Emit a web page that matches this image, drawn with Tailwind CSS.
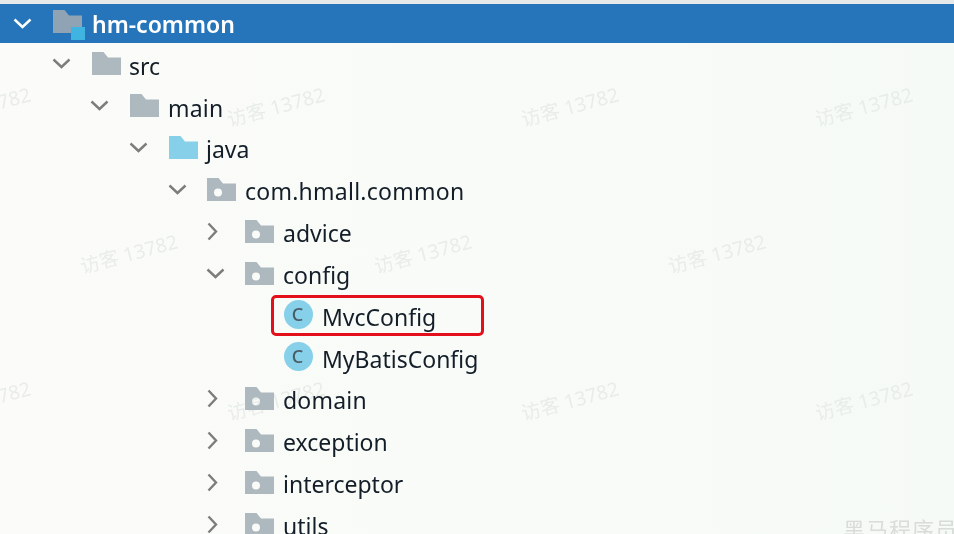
<!DOCTYPE html>
<html><head><meta charset="utf-8"><script src="https://cdn.jsdelivr.net/npm/@tailwindcss/browser@4"></script></head>
<body class="m-0">
<svg width="0" height="0" class="absolute">
<defs>
<path id="f" d="M0 0H11.5L16 5.5H29V23H0Z"/>
<path id="p" fill-rule="evenodd" d="M0 0H11.5L16 5.5H29V23H0ZM7 14.5a4 4 0 1 0 8 0a4 4 0 1 0-8 0Z"/>
<path id="d" d="M1.5 1.5L9.5 9L17.5 1.5" fill="none" stroke-width="2.4"/>
<path id="r" d="M1.5 1.5L9 9.5L1.5 17.5" fill="none" stroke-width="2.4"/>
</defs>
</svg>
<div class="relative w-[954px] h-[534px] overflow-hidden bg-gradient-to-r from-[#fbfcf9] to-[#f6faf6] font-['Noto_Sans','Noto_Sans_CJK_SC',sans-serif] text-[23px] text-[#141e28] blur-[0.4px]">
  <!-- watermarks -->
  <div class="absolute inset-0 text-[19.5px] text-[#e9edea] font-['Noto_Sans','Noto_Sans_CJK_SC',sans-serif]">
    <span class="absolute left-[-68px] top-[92px] -rotate-[15deg] whitespace-nowrap">访客 13782</span>
    <span class="absolute left-[226px] top-[92px] -rotate-[15deg] whitespace-nowrap">访客 13782</span>
    <span class="absolute left-[520px] top-[92px] -rotate-[15deg] whitespace-nowrap">访客 13782</span>
    <span class="absolute left-[814px] top-[92px] -rotate-[15deg] whitespace-nowrap">访客 13782</span>
    <span class="absolute left-[79px] top-[239px] -rotate-[15deg] whitespace-nowrap">访客 13782</span>
    <span class="absolute left-[373px] top-[239px] -rotate-[15deg] whitespace-nowrap">访客 13782</span>
    <span class="absolute left-[667px] top-[239px] -rotate-[15deg] whitespace-nowrap">访客 13782</span>
    <span class="absolute left-[-68px] top-[386px] -rotate-[15deg] whitespace-nowrap">访客 13782</span>
    <span class="absolute left-[226px] top-[386px] -rotate-[15deg] whitespace-nowrap">访客 13782</span>
    <span class="absolute left-[520px] top-[386px] -rotate-[15deg] whitespace-nowrap">访客 13782</span>
    <span class="absolute left-[814px] top-[386px] -rotate-[15deg] whitespace-nowrap">访客 13782</span>
    <span class="absolute left-[843px] top-[513px] text-[22px] tracking-[1px] text-[#d9dcd9] whitespace-nowrap">黑马程序员</span>
  </div>

  <div class="relative flex flex-col pt-[4px]">
    <div class="flex items-center h-[39px] bg-[#2675bb] text-white font-semibold pl-[13px] shadow-[0_-4px_0_#e6e8ea]">
      <svg class="w-[19px] h-[11px] stroke-white -mt-[1px]" viewBox="0 0 19 11"><use href="#d"/></svg>
      <svg class="ml-[21px] w-[32px] h-[30px] mt-[3px]" viewBox="0 0 32 30"><use href="#f" fill="#8fa3b5"/><rect x="18" y="17" width="14" height="13" fill="#3fb4e0"/></svg>
      <span class="ml-[7px] mt-[1px]">hm-common</span>
    </div>
    <div class="flex items-center h-[41.85px] pl-[52px]"><svg class="w-[19px] h-[11px] stroke-[#7d7d7d]" viewBox="0 0 19 11"><use href="#d"/></svg><svg class="ml-[21px] w-[29px] h-[23px] fill-[#adb8bf]" viewBox="0 0 29 23"><use href="#f"/></svg><span class="ml-[8px] mt-[4px]">src</span></div>
    <div class="flex items-center h-[41.85px] pl-[90px]"><svg class="w-[19px] h-[11px] stroke-[#7d7d7d]" viewBox="0 0 19 11"><use href="#d"/></svg><svg class="ml-[21px] w-[29px] h-[23px] fill-[#adb8bf]" viewBox="0 0 29 23"><use href="#f"/></svg><span class="ml-[9px] mt-[4px] tracking-[0.2px]">main</span></div>
    <div class="flex items-center h-[41.85px] pl-[129px]"><svg class="w-[19px] h-[11px] stroke-[#7d7d7d]" viewBox="0 0 19 11"><use href="#d"/></svg><svg class="ml-[21px] w-[29px] h-[23px] fill-[#87d0ea]" viewBox="0 0 29 23"><use href="#f"/></svg><span class="ml-[8px] mt-[4px]">java</span></div>
    <div class="flex items-center h-[41.85px] pl-[168px]"><svg class="w-[19px] h-[11px] stroke-[#7d7d7d]" viewBox="0 0 19 11"><use href="#d"/></svg><svg class="ml-[20px] w-[29px] h-[23px] fill-[#adb8bf]" viewBox="0 0 29 23"><use href="#p"/></svg><span class="ml-[9px] mt-[4px] tracking-[0.25px]">com.hmall.common</span></div>
    <div class="flex items-center h-[41.85px] pl-[207px]"><svg class="w-[11px] h-[19px] stroke-[#7d7d7d]" viewBox="0 0 11 19"><use href="#r"/></svg><svg class="ml-[27px] w-[29px] h-[23px] fill-[#adb8bf]" viewBox="0 0 29 23"><use href="#p"/></svg><span class="ml-[9px] mt-[4px]">advice</span></div>
    <div class="flex items-center h-[41.85px] pl-[206px]"><svg class="w-[19px] h-[11px] stroke-[#7d7d7d]" viewBox="0 0 19 11"><use href="#d"/></svg><svg class="ml-[20px] w-[29px] h-[23px] fill-[#adb8bf]" viewBox="0 0 29 23"><use href="#p"/></svg><span class="ml-[9px] mt-[4px]">config</span></div>
    <div class="relative flex items-center h-[41.85px] pl-[284px]">
      <span class="flex items-center justify-center w-[29px] h-[29px] rounded-full bg-[#87d0ea] text-[18px] text-[#4b5b66] font-medium pr-[2px]">C</span><span class="ml-[9px] mt-[4px]">MvcConfig</span>
      <div class="absolute left-[271px] top-[1px] w-[213px] h-[41px] rounded-[5px] border-[3px] border-[#e3101c]"></div>
    </div>
    <div class="flex items-center h-[41.85px] pl-[284px]"><span class="flex items-center justify-center w-[29px] h-[29px] rounded-full bg-[#87d0ea] text-[18px] text-[#4b5b66] font-medium pr-[2px]">C</span><span class="ml-[9px] mt-[4px]">MyBatisConfig</span></div>
    <div class="flex items-center h-[41.85px] pl-[207px]"><svg class="w-[11px] h-[19px] stroke-[#7d7d7d]" viewBox="0 0 11 19"><use href="#r"/></svg><svg class="ml-[27px] w-[29px] h-[23px] fill-[#adb8bf]" viewBox="0 0 29 23"><use href="#p"/></svg><span class="ml-[9px] mt-[4px] tracking-[0.2px]">domain</span></div>
    <div class="flex items-center h-[41.85px] pl-[207px]"><svg class="w-[11px] h-[19px] stroke-[#7d7d7d]" viewBox="0 0 11 19"><use href="#r"/></svg><svg class="ml-[27px] w-[29px] h-[23px] fill-[#adb8bf]" viewBox="0 0 29 23"><use href="#p"/></svg><span class="ml-[9px] mt-[4px]">exception</span></div>
    <div class="flex items-center h-[41.85px] pl-[207px]"><svg class="w-[11px] h-[19px] stroke-[#7d7d7d]" viewBox="0 0 11 19"><use href="#r"/></svg><svg class="ml-[27px] w-[29px] h-[23px] fill-[#adb8bf]" viewBox="0 0 29 23"><use href="#p"/></svg><span class="ml-[9px] mt-[4px]">interceptor</span></div>
    <div class="flex items-center h-[41.85px] pl-[207px]"><svg class="w-[11px] h-[19px] stroke-[#7d7d7d]" viewBox="0 0 11 19"><use href="#r"/></svg><svg class="ml-[27px] w-[29px] h-[23px] fill-[#adb8bf]" viewBox="0 0 29 23"><use href="#p"/></svg><span class="ml-[9px] mt-[4px]">utils</span></div>
  </div>
</div>
</body></html>
